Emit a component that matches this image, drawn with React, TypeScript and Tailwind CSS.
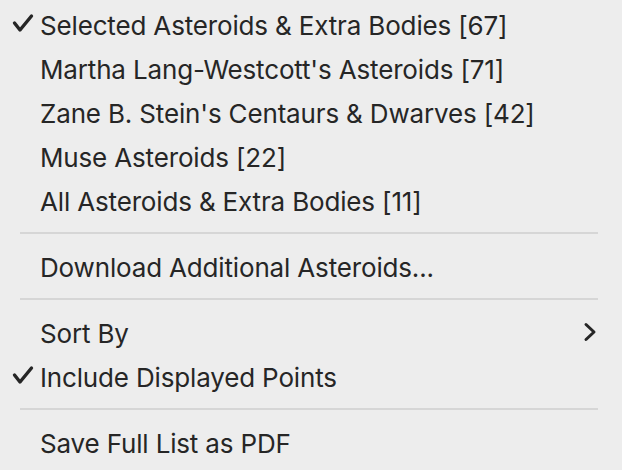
import { Fragment } from "react";

type Item =
  | { kind: "item"; label: string; checked?: boolean; submenu?: boolean }
  | { kind: "sep" };

const items: Item[] = [
  { kind: "item", label: "Selected Asteroids & Extra Bodies [67]", checked: true },
  { kind: "item", label: "Martha Lang-Westcott's Asteroids [71]" },
  { kind: "item", label: "Zane B. Stein's Centaurs & Dwarves [42]" },
  { kind: "item", label: "Muse Asteroids [22]" },
  { kind: "item", label: "All Asteroids & Extra Bodies [11]" },
  { kind: "sep" },
  { kind: "item", label: "Download Additional Asteroids..." },
  { kind: "sep" },
  { kind: "item", label: "Sort By", submenu: true },
  { kind: "item", label: "Include Displayed Points", checked: true },
  { kind: "sep" },
  { kind: "item", label: "Save Full List as PDF" },
];

function Check() {
  return (
    <svg width="22" height="22" viewBox="0 0 22 22" className="absolute left-[12px] top-1/2 -translate-y-1/2">
      <path d="M2.5 10 L8 17 L19.5 3" fill="none" stroke="#262626" strokeWidth="3.4" strokeLinecap="round" strokeLinejoin="round" />
    </svg>
  );
}

function Chevron() {
  return (
    <svg width="16" height="22" viewBox="0 0 16 22" className="absolute right-[24px] top-1/2 -translate-y-1/2">
      <path d="M4 3.5 L12 11 L4 18.5" fill="none" stroke="#262626" strokeWidth="3" strokeLinecap="round" strokeLinejoin="round" />
    </svg>
  );
}

export default function App() {
  return (
    <div
      className="w-[622px] h-[470px] bg-[#ededed] pt-[2px] overflow-hidden text-[#262626] text-[26px] tracking-[-0.16px]"
      style={{ fontFamily: "Inter, 'Liberation Sans', sans-serif" }}
    >
      {items.map((it, i) => (
        <Fragment key={i}>
          {it.kind === "sep" ? (
            <div className="mx-[20px] w-[578px] h-[2px] my-[10px] bg-[#d6d6d6]" />
          ) : (
            <div className="relative h-[44px] flex items-center pl-[40px] pt-[3px]">
              {it.checked && <Check />}
              <span className="leading-none whitespace-nowrap">{it.label}</span>
              {it.submenu && <Chevron />}
            </div>
          )}
        </Fragment>
      ))}
    </div>
  );
}
